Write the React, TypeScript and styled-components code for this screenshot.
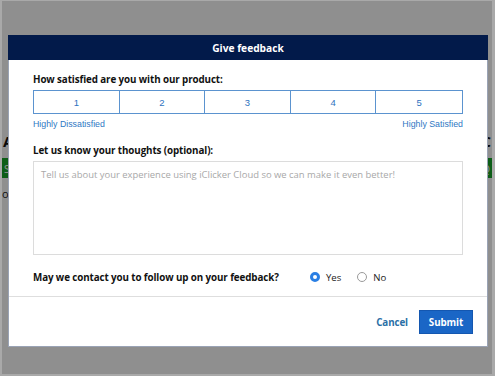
import React, { useState } from "react";
import styled, { createGlobalStyle } from "styled-components";

const Global = createGlobalStyle`
  html, body { margin: 0; padding: 0; background: #a9a9a9; }
  * { box-sizing: border-box; }
`;

const Frame = styled.div`
  width: 495px;
  height: 376px;
  border-style: solid;
  border-color: #a9a9a9;
  border-width: 1px 3px 2px 2px;
  overflow: hidden;
`;

const Stage = styled.div`
  position: relative;
  width: 100%;
  height: 100%;
  background: #fff;
  overflow: hidden;
`;

const BackPage = styled.div`
  display: flex;
  flex-direction: column;
  padding-top: 131px;
  font-family: "Open Sans", "Liberation Sans", sans-serif;
`;

const BackHeading = styled.div`
  display: flex;
  justify-content: space-between;
  padding: 0 1px 0 1px;
  font-size: 15px;
  font-weight: 700;
  line-height: 18px;
  color: #111;
`;

const GreenBar = styled.div`
  margin-top: 8px;
  height: 20px;
  background: #17a62a;
  display: flex;
  justify-content: space-between;
  align-items: center;
  padding: 0 2px;
  font-size: 11px;
  color: #fff;
`;

const BackText = styled.div`
  margin-top: 8px;
  font-size: 11px;
  color: #222;
`;

const Overlay = styled.div`
  position: absolute;
  inset: 0;
  background: rgba(0, 0, 0, 0.44);
  padding: 34px 0 0 6px;
`;

const Modal = styled.div`
  width: 480px;
  height: 312px;
  background: #fff;
  border: 1px solid #9aa3b5;
  display: flex;
  flex-direction: column;
  font-family: "Open Sans", "Liberation Sans", sans-serif;
`;

const Header = styled.div`
  height: 29px;
  background: #021a4a;
  color: #fff;
  font-weight: 700;
  font-size: 10.2px;
  display: flex;
  align-items: center;
  justify-content: center;
  margin: -1px -1px 0 -1px;
`;

const Body = styled.div`
  display: flex;
  flex-direction: column;
  padding: 13px 24px 12px 24px;
`;

const Label = styled.div<{ $mt?: number }>`
  font-size: 9.8px;
  letter-spacing: -0.1px;
  font-weight: 700;
  line-height: 14px;
  color: #111;
  margin-top: ${(p) => p.$mt ?? 0}px;
`;

const Rating = styled.div`
  margin-top: 3px;
  display: grid;
  grid-template-columns: repeat(5, 1fr);
  border: 1px solid #5b93cf;
  height: 24px;
`;

const RateCell = styled.button<{ $last?: boolean }>`
  border: none;
  border-right: ${(p) => (p.$last ? "none" : "1px solid #5b93cf")};
  background: #fff;
  color: #2f73c0;
  font-family: "Liberation Sans", Arial, sans-serif;
  font-size: 9.5px;
  padding: 0;
  cursor: pointer;
`;

const ScaleLabels = styled.div`
  margin-top: 4px;
  display: flex;
  justify-content: space-between;
  font-family: "Liberation Sans", Arial, sans-serif;
  font-size: 8.8px;
  line-height: 12px;
  color: #2f78c4;
`;

const TextArea = styled.textarea`
  margin-top: 3px;
  height: 94px;
  width: 100%;
  resize: none;
  border: 1px solid #dcdcdc;
  padding: 6px 7px;
  font-family: "Open Sans", "Liberation Sans", sans-serif;
  font-size: 9.45px;
  line-height: 14px;
  outline: none;
  &::placeholder {
    color: #a8a8a8;
  }
`;

const ContactRow = styled.div`
  margin-top: 15px;
  display: flex;
  align-items: center;
  height: 14px;
`;

const ContactLabel = styled.div`
  font-size: 9.8px;
  letter-spacing: -0.1px;
  font-weight: 700;
  color: #111;
  width: 277px;
`;

const RadioOption = styled.label<{ $gap: number }>`
  display: flex;
  align-items: center;
  gap: 6px;
  margin-right: ${(p) => p.$gap}px;
  font-size: 9.6px;
  color: #222;
  cursor: pointer;
`;

const Radio = styled.input`
  appearance: none;
  margin: 0;
  width: 10px;
  height: 10px;
  border-radius: 50%;
  border: 1px solid #9a9a9a;
  background: #fff;
  &:checked {
    border: 3px solid #2a7fe4;
    background: #fff;
  }
`;

const Divider = styled.div`
  height: 1px;
  background: #dedede;
`;

const Footer = styled.div`
  display: flex;
  justify-content: flex-end;
  align-items: center;
  gap: 10px;
  padding: 13px 14px 12px 0;
`;

const CancelButton = styled.button`
  border: none;
  background: none;
  color: #2b6fa6;
  font-family: "Open Sans", "Liberation Sans", sans-serif;
  font-weight: 700;
  font-size: 9.8px;
  letter-spacing: -0.1px;
  padding: 0 1px;
  cursor: pointer;
`;

const SubmitButton = styled.button`
  width: 54px;
  height: 24px;
  border: 1px solid #1457b0;
  background: #1a66c6;
  color: #fff;
  font-family: "Open Sans", "Liberation Sans", sans-serif;
  font-weight: 700;
  font-size: 9.8px;
  letter-spacing: -0.1px;
  padding: 0;
  cursor: pointer;
`;

export default function App() {
  const [contact, setContact] = useState("yes");
  return (
    <>
      <Global />
      <Frame>
        <Stage>
          <BackPage>
            <BackHeading>
              <span>A</span>
              <span>C</span>
            </BackHeading>
            <GreenBar>
              <span>Start</span>
              <span>Q</span>
            </GreenBar>
            <BackText>or</BackText>
          </BackPage>
          <Overlay>
            <Modal>
              <Header>Give feedback</Header>
              <Body>
                <Label>How satisfied are you with our product:</Label>
                <Rating>
                  {[1, 2, 3, 4, 5].map((n) => (
                    <RateCell key={n} $last={n === 5}>
                      {n}
                    </RateCell>
                  ))}
                </Rating>
                <ScaleLabels>
                  <span>Highly Dissatisfied</span>
                  <span>Highly Satisfied</span>
                </ScaleLabels>
                <Label $mt={14}>Let us know your thoughts (optional):</Label>
                <TextArea placeholder="Tell us about your experience using iClicker Cloud so we can make it even better!" />
                <ContactRow>
                  <ContactLabel>May we contact you to follow up on your feedback?</ContactLabel>
                  <RadioOption $gap={16}>
                    <Radio
                      type="radio"
                      name="contact"
                      checked={contact === "yes"}
                      onChange={() => setContact("yes")}
                    />
                    Yes
                  </RadioOption>
                  <RadioOption $gap={0}>
                    <Radio
                      type="radio"
                      name="contact"
                      checked={contact === "no"}
                      onChange={() => setContact("no")}
                    />
                    No
                  </RadioOption>
                </ContactRow>
              </Body>
              <Divider />
              <Footer>
                <CancelButton>Cancel</CancelButton>
                <SubmitButton>Submit</SubmitButton>
              </Footer>
            </Modal>
          </Overlay>
        </Stage>
      </Frame>
    </>
  );
}
